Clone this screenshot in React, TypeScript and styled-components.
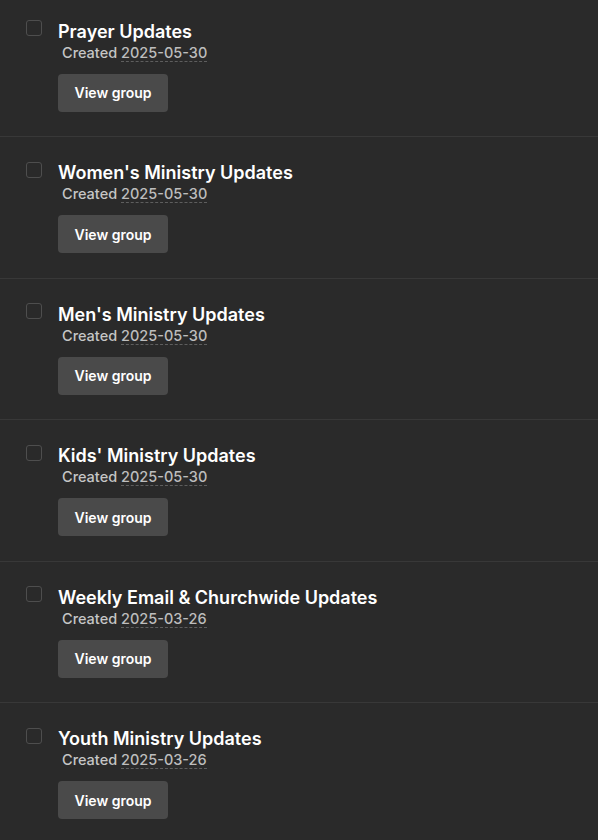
import React from "react";
import styled, { createGlobalStyle } from "styled-components";

const GlobalStyle = createGlobalStyle`
  html, body {
    margin: 0;
    padding: 0;
    background: #2a2a2a;
  }
  body {
    font-family: Inter, "Noto Sans", sans-serif;
    -webkit-font-smoothing: antialiased;
  }
`;

const List = styled.ul`
  list-style: none;
  margin: 0;
  padding: 0;
  width: 598px;
  min-height: 840px;
  background: #2a2a2a;
`;

const Row = styled.li`
  display: flex;
  align-items: flex-start;
  gap: 16px;
  padding: 24px 26px 24.5px;
  border-bottom: 1px solid #383838;

  &:first-child {
    padding-top: 19.5px;
  }
`;

const Check = styled.input.attrs({ type: "checkbox" })`
  appearance: none;
  flex: none;
  width: 16px;
  height: 16px;
  margin: 0.5px 0 0;
  border: 1px solid #4e4e4e;
  border-radius: 3px;
  background: transparent;
  box-sizing: border-box;
`;

const Body = styled.div`
  display: flex;
  flex-direction: column;
  align-items: flex-start;
`;

const Title = styled.h3`
  margin: 0;
  padding-top: 1px;
  font-size: 18px;
  line-height: 21px;
  font-weight: 600;
  color: #ffffff;
`;

const Meta = styled.div`
  margin: 1px 0 0 4px;
  font-size: 14.5px;
  line-height: 20px;
  font-weight: 500;
  color: #c6c6c6;
`;

const DateText = styled.time`
  color: #bdbdbd;
  border-bottom: 1px dashed #5e5e5e;
`;

const ViewButton = styled.button`
  margin-top: 11px;
  height: 38px;
  width: 110px;
  padding: 0;
  border: none;
  border-radius: 4px;
  background: #4a4a4a;
  color: #ffffff;
  font-family: inherit;
  font-size: 14px;
  font-weight: 600;
  cursor: pointer;
`;

const groups = [
  { name: "Prayer Updates", created: "2025-05-30" },
  { name: "Women's Ministry Updates", created: "2025-05-30" },
  { name: "Men's Ministry Updates", created: "2025-05-30" },
  { name: "Kids' Ministry Updates", created: "2025-05-30" },
  { name: "Weekly Email & Churchwide Updates", created: "2025-03-26" },
  { name: "Youth Ministry Updates", created: "2025-03-26" },
];

export default function App() {
  return (
    <>
      <GlobalStyle />
      <List>
        {groups.map((g) => (
          <Row key={g.name}>
            <Check aria-label={g.name} />
            <Body>
              <Title>{g.name}</Title>
              <Meta>
                Created <DateText dateTime={g.created}>{g.created}</DateText>
              </Meta>
              <ViewButton>View group</ViewButton>
            </Body>
          </Row>
        ))}
      </List>
    </>
  );
}
